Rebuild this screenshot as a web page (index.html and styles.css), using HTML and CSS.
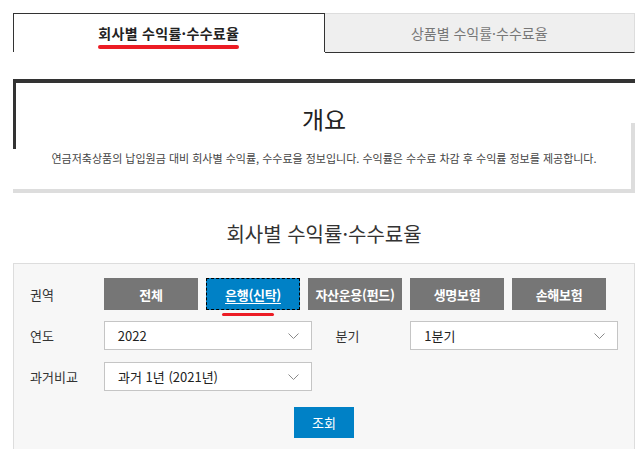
FILE: index.html
```html
<!DOCTYPE html>
<html lang="ko">
<head>
  <meta charset="UTF-8">
  <meta name="viewport" content="width=device-width, initial-scale=1.0">
  <title>회사별 수익률·수수료율</title>
  <link rel="stylesheet" href="styles.css">
</head>
<body>

  <div class="wrap">
    <nav class="tabs">
      <a class="tab active" href="#"><span class="mark">회사별 수익률·수수료율</span></a>
      <a class="tab" href="#">상품별 수익률·수수료율</a>
    </nav>

    <section class="overview">
      <h2>개요</h2>
      <p>연금저축상품의 납입원금 대비 회사별 수익률, 수수료을 정보입니다. 수익률은 수수료 차감 후 수익률 정보를 제공합니다.</p>
    </section>

    <h3 class="title">회사별 수익률·수수료율</h3>

    <section class="search">
      <div class="row">
        <span class="label">권역</span>
        <div class="areas">
          <button class="area">전체</button>
          <button class="area on"><span>은행(신탁)</span></button>
          <button class="area">자산운용(펀드)</button>
          <button class="area">생명보험</button>
          <button class="area">손해보험</button>
        </div>
      </div>

      <div class="row">
        <span class="label">연도</span>
        <div class="select">
          <span>2022</span>
          <svg width="11" height="6" viewBox="0 0 11 6"><path d="M0.5 0.5 L5.5 5.5 L10.5 0.5" fill="none" stroke="#8a8a8a" stroke-width="1"/></svg>
        </div>
        <span class="label second">분기</span>
        <div class="select">
          <span>1분기</span>
          <svg width="11" height="6" viewBox="0 0 11 6"><path d="M0.5 0.5 L5.5 5.5 L10.5 0.5" fill="none" stroke="#8a8a8a" stroke-width="1"/></svg>
        </div>
      </div>

      <div class="row">
        <span class="label">과거비교</span>
        <div class="select">
          <span>과거 1년 (2021년)</span>
          <svg width="11" height="6" viewBox="0 0 11 6"><path d="M0.5 0.5 L5.5 5.5 L10.5 0.5" fill="none" stroke="#8a8a8a" stroke-width="1"/></svg>
        </div>
      </div>

      <div class="submit">
        <button class="btn-search">조회</button>
      </div>
    </section>
  </div>

</body>
</html>
```

FILE: styles.css
```css
body {
  margin: 0;
  background-color: #fff;
  color: #333;
  font-family: "Noto Sans CJK KR", "Noto Sans", sans-serif;
}
.wrap {
  padding: 13px 8px 0 13px;
}
.tabs {
  display: flex;
}
.tab {
  flex: 1;
  height: 38px;
  display: flex;
  justify-content: center;
  align-items: center;
  font-size: 14px;
  text-decoration: none;
}
.tab.active {
  border: 1px solid #333;
  border-bottom: none;
  color: #222;
  font-weight: bold;
  letter-spacing: 0.3px;
}
.tab:not(.active) {
  background-color: #efefef;
  border-top: 1px solid #ddd;
  border-right: 1px solid #ddd;
  border-bottom: 1px solid #333;
  color: #777;
}
.mark {
  position: relative;
}
.mark::after {
  content: "";
  position: absolute;
  left: 0;
  right: 0;
  bottom: -6px;
  height: 4px;
  border-radius: 2px;
  background-color: #ec1c24;
}
.overview {
  position: relative;
  margin-top: 26px;
  border-top: 4px solid #333;
  border-bottom: 4px solid #ddd;
  padding: 22px 0 22px;
  text-align: center;
}
.overview::before {
  content: "";
  position: absolute;
  left: 0;
  top: 0;
  width: 3px;
  height: 66px;
  background-color: #333;
}
.overview::after {
  content: "";
  position: absolute;
  right: 0;
  top: 40px;
  bottom: 0;
  width: 4px;
  background-color: #ddd;
}
.overview h2 {
  margin: 0;
  font-size: 24px;
  line-height: 28px;
  font-weight: normal;
  color: #222;
}
.overview p {
  margin: 16px 0 0;
  font-size: 11px;
  line-height: 18px;
  color: #444;
}
.title {
  margin: 27px 0 15px;
  font-size: 20px;
  line-height: 28px;
  font-weight: normal;
  text-align: center;
  color: #333;
}
.search {
  background-color: #f7f7f7;
  border: 1px solid #ddd;
  padding: 14px 16px 30px;
}
.row {
  display: flex;
  align-items: center;
  margin-top: 12px;
}
.row:first-child {
  margin-top: 0;
}
.row:nth-child(2) {
  margin-top: 11px;
}
.label {
  width: 74px;
  font-size: 13px;
  color: #333;
}
.label.second {
  margin-left: 24px;
  width: 75px;
}
.areas {
  display: flex;
  gap: 8px;
}
.area {
  position: relative;
  width: 94px;
  height: 32px;
  border: none;
  background-color: #767676;
  color: #fff;
  font-family: inherit;
  font-size: 13px;
  font-weight: bold;
  letter-spacing: -0.3px;
  cursor: pointer;
}
.area.on {
  background-color: #0081c6;
  outline: 1px dashed #000;
  outline-offset: -1px;
}
.area.on span {
  text-decoration: underline;
  text-underline-offset: 3px;
}
.area.on::after {
  content: "";
  position: absolute;
  left: 16px;
  width: 52px;
  bottom: -6px;
  height: 3px;
  border-radius: 2px;
  background-color: #ec1c24;
}
.select {
  width: 208px;
  height: 29px;
  box-sizing: border-box;
  border: 1px solid #c5c5c5;
  background-color: #fff;
  display: flex;
  align-items: center;
  justify-content: space-between;
  padding: 0 12px 0 13px;
  font-size: 13px;
  color: #222;
}
.select svg {
  display: block;
}
.submit {
  display: flex;
  justify-content: center;
  margin-top: 16px;
}
.btn-search {
  width: 60px;
  height: 31px;
  border: none;
  background-color: #0081c6;
  color: #fff;
  font-family: inherit;
  font-size: 13px;
  cursor: pointer;
}
```
